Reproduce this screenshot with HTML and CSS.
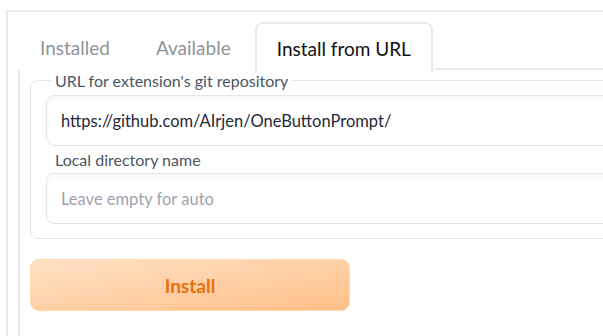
FILE: index.html
```html
<!DOCTYPE html>
<html lang="en">
<head>
    <meta charset="UTF-8">
    <meta name="viewport" content="width=device-width, initial-scale=1.0">
    <title>Extensions</title>
    <link rel="stylesheet" href="styles.css">
</head>
<body>

<div class="outer">
    <div class="tab-nav">
        <button class="tab">Installed</button>
        <button class="tab">Available</button>
        <button class="tab selected">Install from URL</button>
        <div class="tab-fill"></div>
    </div>

    <div class="tab-panel">
        <fieldset class="form">
            <legend>URL for extension's git repository</legend>
            <input class="text-input" type="text" value="https://github.com/AIrjen/OneButtonPrompt/">
            <label class="field-label">Local directory name</label>
            <input class="text-input" type="text" placeholder="Leave empty for auto">
        </fieldset>

        <button class="install-button">Install</button>
    </div>
</div>

</body>
</html>
```

FILE: styles.css
```css
body {
    margin: 0;
    padding: 10px 0 0 6px;
    font-family: "Lato", "Noto Sans", sans-serif;
    background: #fff;
    overflow: hidden;
}
.outer {
    width: 900px;
    border-top: 2px solid #ebebef;
    border-left: 2px solid #ebebef;
    padding: 10px 0 0 10px;
}
.tab-nav {
    display: flex;
    align-items: flex-end;
    gap: 2px;
}
.tab {
    height: 48px;
    padding: 0 20px;
    border: 2px solid transparent;
    border-bottom: none;
    background: none;
    font-family: inherit;
    font-size: 19px;
    color: #8f939c;
    cursor: pointer;
}
.tab.selected {
    color: #111;
    border-color: #e7e7ec;
    border-radius: 8px 8px 0 0;
    background: #fff;
    margin-bottom: -2px;
    height: 50px;
}
.tab-fill {
    flex: 1;
    border-bottom: 2px solid #e7e7ec;
}
.tab-panel {
    border-left: 2px solid #e7e7ec;
    padding: 1px 0 25px 10px;
}
.form {
    margin: 0;
    padding: 5px 0 14px 15px;
    border: 1px solid #e5e5e9;
    border-radius: 8px;
    display: flex;
    flex-direction: column;
}
.form legend {
    margin-left: 5px;
    padding: 0 4px;
    font-size: 16px;
    color: #4b5563;
}
.text-input {
    height: 51px;
    box-sizing: border-box;
    padding: 0 14px;
    border: 1px solid #e5e5e9;
    border-radius: 8px;
    box-shadow: inset 0 2px 4px rgba(0,0,0,0.04);
    font-family: inherit;
    font-size: 16.5px;
    color: #1f2937;
    outline: none;
}
.text-input::placeholder {
    color: #9ca3af;
}
.field-label {
    margin: 4px 0 4px 9px;
    font-size: 16px;
    color: #4b5563;
}
.install-button {
    margin-top: 20px;
    width: 320px;
    height: 52px;
    border: 1px solid #fed7aa;
    border-radius: 9px;
    background: linear-gradient(to bottom right, #ffe2c6, #ffbf88);
    font-family: inherit;
    font-size: 19px;
    font-weight: bold;
    color: #ea700b;
    cursor: pointer;
}
```
